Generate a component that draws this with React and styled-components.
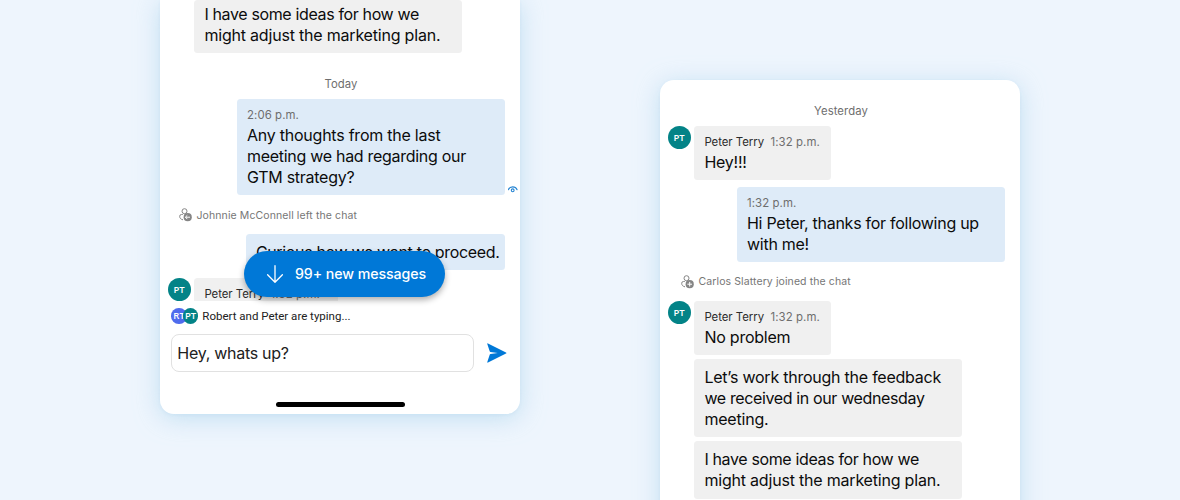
import React from "react";
import styled, { createGlobalStyle } from "styled-components";

const GlobalStyle = createGlobalStyle`
  * { box-sizing: border-box; }
  body {
    margin: 0;
    background: #eef5fd;
    font-family: Inter, "Liberation Sans", sans-serif;
    color: #111;
  }
`;

const Stage = styled.main`
  display: flex;
  gap: 140px;
  width: 1180px;
  height: 500px;
  padding: 0 160px;
  overflow: hidden;
  background: #eef5fd;
`;

const Phone = styled.section`
  display: flex;
  flex-direction: column;
  flex: none;
  width: 360px;
  height: ${(p) => p.$height}px;
  margin-top: ${(p) => p.$top || 0}px;
  border-radius: ${(p) => p.$radius};
  background: #fff;
  box-shadow: 0 1px 3px rgba(170, 212, 235, 0.2), 0 4px 24px rgba(165, 210, 235, 0.62);
`;

const DayLabel = styled.div`
  margin: 24px 0 7px;
  padding-left: 2px;
  text-align: center;
  font-size: 11.3px;
  line-height: 15px;
  letter-spacing: 0.08px;
  color: #6e6e6e;
`;

const MessageRow = styled.div`
  display: flex;
  align-items: flex-start;
  flex: none;
  justify-content: ${(p) => (p.$mine ? "flex-end" : "flex-start")};
  padding: ${(p) => (p.$mine ? "0 15px 0 0" : p.$grouped ? "0 0 0 34.4px" : "0 0 0 7.5px")};
  margin-top: ${(p) => p.$gap || 0}px;
  height: ${(p) => (p.$clip ? `${p.$clip}px` : "auto")};
  overflow: ${(p) => (p.$clip ? "hidden" : "visible")};
`;

const Bubble = styled.div`
  width: ${(p) => p.$width || 268}px;
  padding: ${(p) => p.$pad || "8px 0 7px 10px"};
  border-radius: 3.5px;
  background: ${(p) => (p.$mine ? "#deebf8" : "#f0f0f0")};
`;

const Meta = styled.div`
  display: flex;
  gap: 6.5px;
  height: 18px;
  padding-top: ${(p) => p.$drop ?? 1}px;
  font-size: 11.4px;
  line-height: 15px;
  letter-spacing: 0.08px;
  color: #6e6e6e;
`;

const Sender = styled.span`
  letter-spacing: -0.04px;
  color: #2b2b2b;
`;

const Line = styled.p`
  margin: 0;
  font-size: 16px;
  line-height: 21px;
  letter-spacing: ${(p) => p.$track ?? -0.24}px;
  white-space: pre;
  color: #0c0c0c;
`;

const Avatar = styled.div`
  display: flex;
  align-items: center;
  justify-content: center;
  flex: none;
  width: ${(p) => p.$size || 23}px;
  height: ${(p) => p.$size || 23}px;
  margin-right: ${(p) => p.$after ?? 3.9}px;
  margin-left: ${(p) => p.$before || 0}px;
  border-radius: 50%;
  background: ${(p) => p.$color || "#038387"};
  font-family: "Open Sans", sans-serif;
  font-size: 9.5px;
  font-weight: 600;
  line-height: 1;
  color: #fff;
`;

const SystemRow = styled.div`
  display: flex;
  align-items: center;
  flex: none;
  gap: 4px;
  height: 16px;
  margin-top: ${(p) => p.$gap}px;
  padding-left: ${(p) => p.$left}px;
  font-size: 10.5px;
  line-height: 16px;
  letter-spacing: 0.1px;
  color: #767676;
  span { padding-top: 1px; }
`;

const Receipt = styled.div`
  position: relative;
  display: flex;
  svg {
    position: absolute;
    right: -13px;
    bottom: 2px;
  }
`;

const Unread = styled.div`
  position: relative;
  display: flex;
  flex-direction: column;
`;

const NewMessages = styled.button`
  position: absolute;
  left: 84.3px;
  top: 28px;
  display: flex;
  align-items: center;
  gap: 10px;
  width: 201px;
  height: 46px;
  padding: 0 0 1px 20.7px;
  border: 0;
  border-radius: 23px;
  background: #0078d7;
  box-shadow: 0 3px 6px rgba(0, 0, 0, 0.32);
  font-family: inherit;
  font-size: 14.2px;
  font-weight: 500;
  letter-spacing: -0.08px;
  white-space: nowrap;
  color: #fff;
`;

const Typing = styled.div`
  display: flex;
  align-items: center;
  height: 16px;
  margin-top: 7px;
  padding-left: 11.3px;
  font-family: Roboto, sans-serif;
  font-size: 11.5px;
  color: #212121;
`;

const Composer = styled.div`
  display: flex;
  align-items: center;
  gap: 13px;
  margin-top: 10px;
  padding-left: 11.3px;
`;

const Field = styled.div`
  width: 303px;
  height: 38px;
  padding-left: 5px;
  border: 1px solid #e1e1e1;
  border-radius: 8px;
  font-size: 16px;
  line-height: 36px;
  letter-spacing: -0.28px;
  color: #212121;
`;

const HomeBar = styled.div`
  width: 129px;
  height: 5px;
  margin: 29.6px auto 0;
  border-radius: 3px;
  background: #000;
`;

const PersonIcon = ({ joined }) => (
  <svg width="14" height="14" viewBox="0 0 14 14" fill="none" stroke="#858585">
    <circle cx="5.5" cy="3.2" r="2.5" />
    <path d="M3.8 6.5H2.5A1.8 1.8 0 0 0 .7 8.3C.7 10.2 1.9 11.4 4 11.8" />
    <circle cx="8.7" cy="9.2" r="4.1" fill="#858585" stroke="none" />
    {joined ? (
      <path d="M6.4 9.2H11M8.7 6.9v4.6" stroke="#fff" />
    ) : (
      <path d="M11 9.2H6.5M8.3 7.3 6.4 9.2l1.9 1.9" stroke="#fff" />
    )}
  </svg>
);

const EyeIcon = () => (
  <svg width="10" height="7" viewBox="0 0 10 7" fill="none" stroke="#2584d3" strokeWidth="1.1">
    <path d="M.3 3.7C1.1 1.9 2.7 .9 4.7 .9s3.6 1 4.4 2.8" strokeLinecap="round" />
    <circle cx="4.7" cy="4.3" r="1.4" />
  </svg>
);

const ArrowDown = () => (
  <svg width="20" height="20" viewBox="0 0 20 20" fill="none" stroke="#fff" strokeWidth="1.3" strokeLinecap="round" strokeLinejoin="round">
    <path d="M10 1.7v16.4M2.6 10.8l7.4 7.4 7.4-7.4" />
  </svg>
);

const SendIcon = () => (
  <svg width="20" height="20" viewBox="0 0 20 20" fill="#0078d7">
    <path d="M.3 1.1C.1.5.5.2 1 .4L19 9.4c.5.3.5.9 0 1.2L1 19.6c-.5.2-.9-.1-.7-.7L2.7 11.8c.1-.4.4-.6.8-.7L10.7 10 3.500 8.900c-.4-.1-.7-.3-.8-.7z" />
  </svg>
);

const Ideas = () => (
  <>
    <Line $track={-0.36}>I have some ideas for how we</Line>
    <Line $track={-0.2}>might adjust the marketing plan.</Line>
  </>
);

const SenderMeta = () => (
  <Meta>
    <Sender>Peter Terry</Sender>1:32 p.m.
  </Meta>
);

export default function App() {
  return (
    <>
      <GlobalStyle />
      <Stage>
        <Phone $height={414} $radius="0 0 14px 14px">
          <MessageRow $grouped>
            <Bubble $pad="3.5px 0 7.5px 10px"><Ideas /></Bubble>
          </MessageRow>
          <DayLabel>Today</DayLabel>
          <MessageRow $mine>
            <Receipt>
              <Bubble $mine>
                <Meta>2:06 p.m.</Meta>
                <Line>Any thoughts from the last</Line>
                <Line $track={-0.29}>meeting we had regarding our</Line>
                <Line $track={-0.27}>GTM strategy?</Line>
              </Bubble>
              <EyeIcon />
            </Receipt>
          </MessageRow>
          <SystemRow $gap={12} $left={18.5}><PersonIcon /><span>Johnnie McConnell left the chat</span></SystemRow>
          <Unread>
            <MessageRow $mine $gap={11}>
              <Bubble $mine $width={258.6} $pad="8px 0 7px 9.5px"><Line $track={-0.34}>Curious how we want to proceed.</Line></Bubble>
            </MessageRow>
            <MessageRow $gap={8} $clip={23}>
              <Avatar>PT</Avatar>
              <Bubble $width={144}><SenderMeta /></Bubble>
            </MessageRow>
            <NewMessages><ArrowDown />99+ new messages</NewMessages>
          </Unread>
          <Typing>
            <Avatar $size={15.5} $color="#4f6bed" $after={0}>RT</Avatar>
            <Avatar $size={15.5} $before={-4} $after={4}>PT</Avatar>
            Robert and Peter are typing...
          </Typing>
          <Composer><Field>Hey, whats up?</Field><SendIcon /></Composer>
          <HomeBar />
        </Phone>

        <Phone $top={80} $height={460} $radius="14px">
          <DayLabel>Yesterday</DayLabel>
          <MessageRow>
            <Avatar>PT</Avatar>
            <Bubble $width={136.5}><SenderMeta /><Line>Hey!!!</Line></Bubble>
          </MessageRow>
          <MessageRow $mine $gap={7.4}>
            <Bubble $mine>
              <Meta>1:32 p.m.</Meta>
              <Line $track={-0.27}>Hi Peter, thanks for following up</Line>
              <Line $track={-0.27}>with me!</Line>
            </Bubble>
          </MessageRow>
          <SystemRow $gap={11.6} $left={20.5}><PersonIcon joined /><span>Carlos Slattery joined the chat</span></SystemRow>
          <MessageRow $gap={11}>
            <Avatar>PT</Avatar>
            <Bubble $width={136.5}><SenderMeta /><Line>No problem</Line></Bubble>
          </MessageRow>
          <MessageRow $grouped $gap={4}>
            <Bubble $pad="8px 0 7.5px 10px">
              <Line>Let’s work through the feedback</Line>
              <Line $track={-0.37}>we received in our wednesday</Line>
              <Line $track={-0.2}>meeting.</Line>
            </Bubble>
          </MessageRow>
          <MessageRow $grouped $gap={4}>
            <Bubble $pad="8px 0 7.5px 10px"><Ideas /></Bubble>
          </MessageRow>
        </Phone>
      </Stage>
    </>
  );
}
